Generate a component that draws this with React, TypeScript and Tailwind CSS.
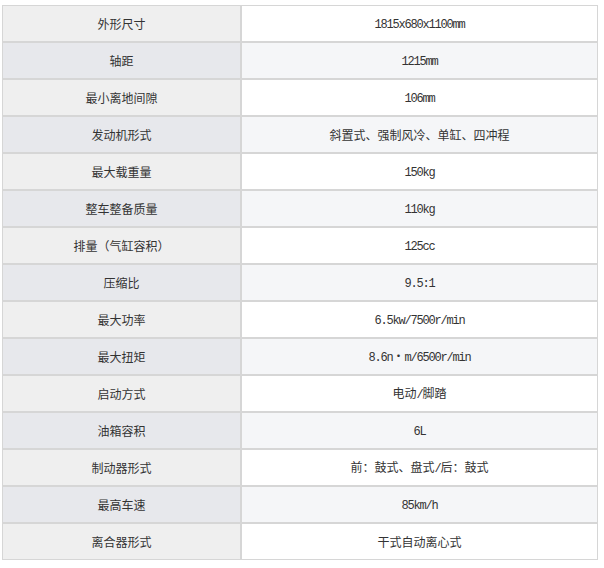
const rows: [string, string][] = [
  ['外形尺寸', '1815x680x1100mm'],
  ['轴距', '1215mm'],
  ['最小离地间隙', '106mm'],
  ['发动机形式', '斜置式、强制风冷、单缸、四冲程'],
  ['最大载重量', '150kg'],
  ['整车整备质量', '110kg'],
  ['排量（气缸容积）', '125cc'],
  ['压缩比', '9.5:1'],
  ['最大功率', '6.5kw/7500r/min'],
  ['最大扭矩', '8.6n・m/6500r/min'],
  ['启动方式', '电动/脚踏'],
  ['油箱容积', '6L'],
  ['制动器形式', '前：鼓式、盘式/后：鼓式'],
  ['最高车速', '85km/h'],
  ['离合器形式', '干式自动离心式'],
]

const cjk = '"Noto Sans CJK SC", "Liberation Sans", sans-serif'

// latin chunks get the narrow mono look, CJK chunks stay in the CJK face
function Value({ text }: { text: string }) {
  const parts = text.match(/[\x20-\x7e]+|[^\x20-\x7e]+/g) || []
  return (
    <>
      {parts.map((p, i) =>
        /^[\x20-\x7e]+$/.test(p) ? (
          <span key={i} className="font-['Liberation_Mono',monospace] tracking-[-1.2px] text-[12px]">
            {p}
          </span>
        ) : (
          <span key={i}>{p}</span>
        )
      )}
    </>
  )
}

export default function App() {
  return (
    <div className="w-[604px] h-[568px] bg-white pt-[5px] pl-[2px]">
      <table
        className="w-[596px] border-separate border-spacing-0 text-[12px] text-[#333]"
        style={{ fontFamily: cjk }}
      >
        <tbody>
          {rows.map(([label, value], i) => {
            const even = i % 2 === 1
            return (
              <tr key={label}>
                <td
                  className={`w-[239px] h-[37px] border border-[#d6d6d6] text-center align-middle p-0 ${
                    even ? 'bg-[#e7e8ec]' : 'bg-[#efefef]'
                  }`}
                >
                  {label}
                </td>
                <td
                  className={`h-[37px] border border-[#d6d6d6] text-center align-middle p-0 ${
                    even ? 'bg-[#f5f6f8]' : 'bg-white'
                  }`}
                >
                  <Value text={value} />
                </td>
              </tr>
            )
          })}
        </tbody>
      </table>
    </div>
  )
}
